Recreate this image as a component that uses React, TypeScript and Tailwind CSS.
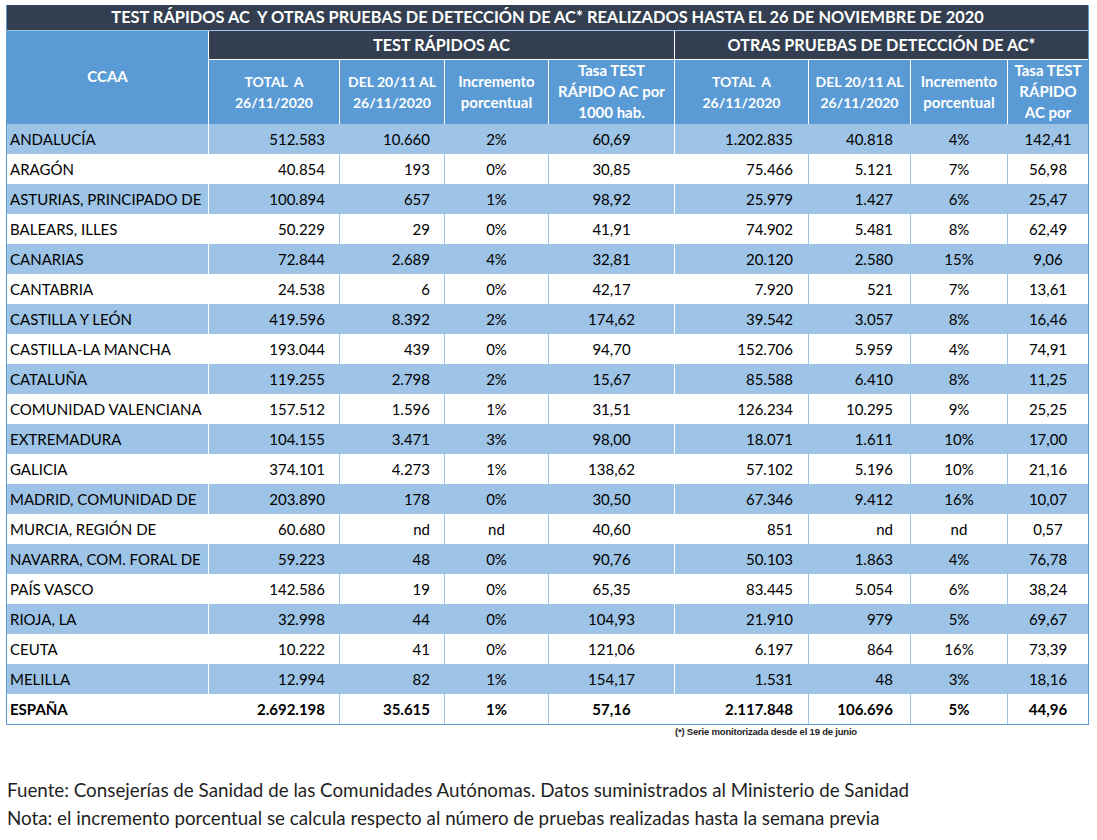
const rows = [
  ["ANDALUCÍA", "512.583", "10.660", "2%", "60,69", "1.202.835", "40.818", "4%", "142,41"],
  ["ARAGÓN", "40.854", "193", "0%", "30,85", "75.466", "5.121", "7%", "56,98"],
  ["ASTURIAS, PRINCIPADO DE", "100.894", "657", "1%", "98,92", "25.979", "1.427", "6%", "25,47"],
  ["BALEARS, ILLES", "50.229", "29", "0%", "41,91", "74.902", "5.481", "8%", "62,49"],
  ["CANARIAS", "72.844", "2.689", "4%", "32,81", "20.120", "2.580", "15%", "9,06"],
  ["CANTABRIA", "24.538", "6", "0%", "42,17", "7.920", "521", "7%", "13,61"],
  ["CASTILLA Y LEÓN", "419.596", "8.392", "2%", "174,62", "39.542", "3.057", "8%", "16,46"],
  ["CASTILLA-LA MANCHA", "193.044", "439", "0%", "94,70", "152.706", "5.959", "4%", "74,91"],
  ["CATALUÑA", "119.255", "2.798", "2%", "15,67", "85.588", "6.410", "8%", "11,25"],
  ["COMUNIDAD VALENCIANA", "157.512", "1.596", "1%", "31,51", "126.234", "10.295", "9%", "25,25"],
  ["EXTREMADURA", "104.155", "3.471", "3%", "98,00", "18.071", "1.611", "10%", "17,00"],
  ["GALICIA", "374.101", "4.273", "1%", "138,62", "57.102", "5.196", "10%", "21,16"],
  ["MADRID, COMUNIDAD DE", "203.890", "178", "0%", "30,50", "67.346", "9.412", "16%", "10,07"],
  ["MURCIA, REGIÓN DE", "60.680", "nd", "nd", "40,60", "851", "nd", "nd", "0,57"],
  ["NAVARRA, COM. FORAL DE", "59.223", "48", "0%", "90,76", "50.103", "1.863", "4%", "76,78"],
  ["PAÍS VASCO", "142.586", "19", "0%", "65,35", "83.445", "5.054", "6%", "38,24"],
  ["RIOJA, LA", "32.998", "44", "0%", "104,93", "21.910", "979", "5%", "69,67"],
  ["CEUTA", "10.222", "41", "0%", "121,06", "6.197", "864", "16%", "73,39"],
  ["MELILLA", "12.994", "82", "1%", "154,17", "1.531", "48", "3%", "18,16"],
];

const total = ["ESPAÑA", "2.692.198", "35.615", "1%", "57,16", "2.117.848", "106.696", "5%", "44,96"];

const cols = "grid grid-cols-[201px_131px_105px_104px_126px_134px_102px_97px_81px]";

// alineación y borde de cada columna
const cellCls = [
  "justify-start pl-[3px]",
  "justify-end pr-[14px] border-l border-white",
  "justify-end pr-[14px] border-l border-[#9dc3e6]",
  "justify-center border-l border-[#9dc3e6]",
  "justify-center border-l border-[#9dc3e6]",
  "justify-end pr-[15px] border-l border-white",
  "justify-end pr-[17px] border-l border-[#9dc3e6]",
  "justify-center border-l border-[#9dc3e6]",
  "justify-center border-l border-[#9dc3e6]",
];

const Row = ({ data, blue, bold }: { data: string[]; blue?: boolean; bold?: boolean }) => (
  <div className={`${cols} h-[30px] ${blue ? "bg-[#9dc3e6]" : "bg-white"} ${bold ? "font-bold" : ""}`}>
    {data.map((v, i) => (
      <div key={i} className={`flex items-center whitespace-nowrap overflow-hidden ${cellCls[i]}`}>
        {v}
      </div>
    ))}
  </div>
);

const SubHead = ({ children, top }: { children: React.ReactNode; top?: boolean }) => (
  <div
    className={`flex flex-col ${top ? "justify-start" : "justify-center"} items-center text-center overflow-hidden leading-[21px] border-l border-white`}
  >
    {children}
  </div>
);

const App = () => {
  return (
    <div className="min-h-screen bg-white pt-[5px] pl-[6px] text-black" style={{ fontFamily: "Lato, 'Liberation Sans', sans-serif" }}>
      {/* Tabla */}
      <div className="w-[1083px] border-x border-b border-[#5b9bd5] text-[15px]">
        {/* Título */}
        <div className="h-[26px] bg-[#333f50] border-b border-[#9dc3e6] flex items-center justify-center text-white font-bold text-[16.4px] whitespace-pre">
          TEST RÁPIDOS AC  Y OTRAS PRUEBAS DE DETECCIÓN DE AC* REALIZADOS HASTA EL 26 DE NOVIEMBRE DE 2020
        </div>
        {/* Cabecera */}
        <div className={`${cols} grid-rows-[29px_64px] text-white font-bold`}>
          <div className="row-span-2 bg-[#5b9bd5] flex items-center justify-center text-[15px] pb-[2px]">CCAA</div>
          <div className="col-span-4 bg-[#333f50] border-l border-b border-white flex items-center justify-center text-[16.2px]">
            TEST RÁPIDOS AC
          </div>
          <div className="col-span-4 bg-[#333f50] border-l border-b border-white flex items-center justify-center text-[16.2px]">
            OTRAS PRUEBAS DE DETECCIÓN DE AC*
          </div>
          <div className="col-span-8 grid grid-cols-[131px_105px_104px_126px_134px_102px_97px_81px] bg-[#5b9bd5] text-[14px]">
            <SubHead>
              <span className="whitespace-pre">TOTAL  A</span>
              <span>26/11/2020</span>
            </SubHead>
            <SubHead>
              <span>DEL 20/11 AL</span>
              <span>26/11/2020</span>
            </SubHead>
            <SubHead>
              <span className="text-[15px]">Incremento</span>
              <span className="text-[15px]">porcentual</span>
            </SubHead>
            <SubHead top>
              <span className="text-[15px]">Tasa TEST</span>
              <span className="text-[15px]">RÁPIDO AC por</span>
              <span className="text-[15px]">1000 hab.</span>
            </SubHead>
            <SubHead>
              <span className="whitespace-pre">TOTAL  A</span>
              <span>26/11/2020</span>
            </SubHead>
            <SubHead>
              <span>DEL 20/11 AL</span>
              <span>26/11/2020</span>
            </SubHead>
            <SubHead>
              <span className="text-[15px]">Incremento</span>
              <span className="text-[15px]">porcentual</span>
            </SubHead>
            <SubHead top>
              <span className="text-[15px]">Tasa TEST</span>
              <span className="text-[15px]">RÁPIDO</span>
              <span className="text-[15px]">AC por</span>
            </SubHead>
          </div>
        </div>
        {/* Filas */}
        {rows.map((r, i) => (
          <Row key={r[0]} data={r} blue={i % 2 === 0} />
        ))}
        <Row data={total} bold />
      </div>
      {/* Nota al pie de la tabla */}
      <div className="w-[1083px] flex">
        <span className="ml-[669px] text-[9.5px] leading-[14px] font-bold tracking-[-0.2px] text-[#222]" style={{ fontFamily: "'Liberation Sans', sans-serif" }}>
          (*) Serie monitorizada desde el 19 de junio
        </span>
      </div>
      {/* Fuente y nota */}
      <div className="mt-[37px] text-[18.8px] text-[#1f1f1f] leading-[28px] pl-[1px]">
        <p>Fuente: Consejerías de Sanidad de las Comunidades Autónomas. Datos suministrados al Ministerio de Sanidad</p>
        <p>Nota: el incremento porcentual se calcula respecto al número de pruebas realizadas hasta la semana previa</p>
      </div>
    </div>
  );
};

export default App;
